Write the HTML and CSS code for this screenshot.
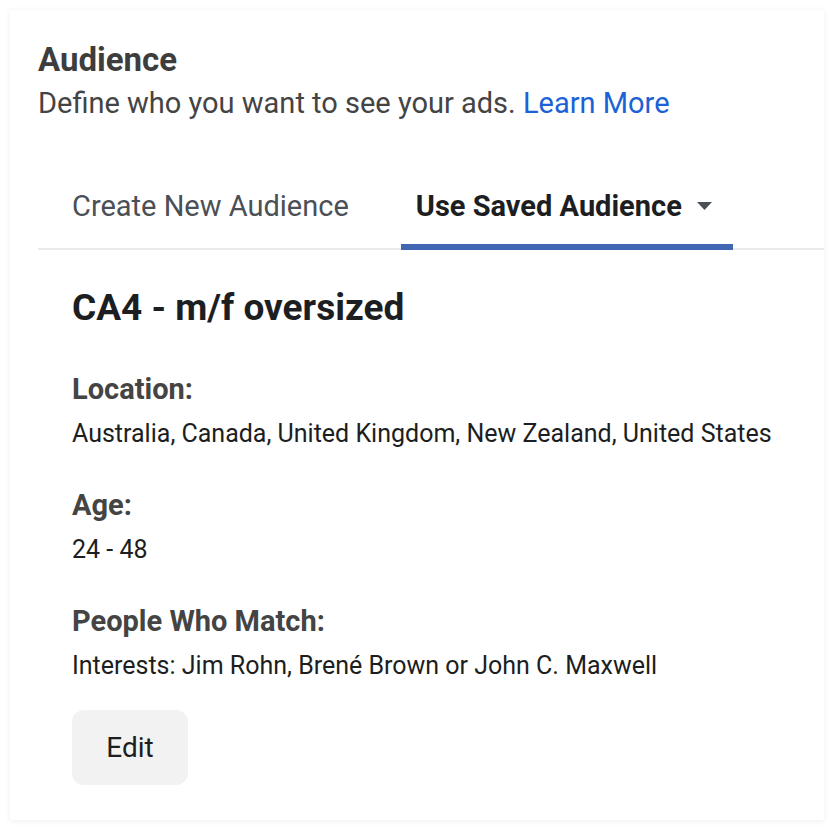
FILE: index.html
```html
<!DOCTYPE html>
<html lang="en">
<head>
<meta charset="utf-8">
<title>Audience</title>
<link rel="stylesheet" href="styles.css">
</head>
<body>
<section class="card">
  <header class="card-head">
    <h1 class="title">Audience</h1>
    <p class="subtitle">Define who you want to see your ads. <a class="link" href="#">Learn More</a></p>
  </header>
  <nav class="tabs">
    <div class="tab">Create New Audience</div>
    <div class="tab tab-active">Use Saved Audience
      <svg class="caret" width="15" height="8" viewBox="0 0 15 8"><path d="M0 0H15L7.5 8Z" fill="#4b4f56"/></svg>
    </div>
  </nav>
  <div class="content">
    <h2 class="aud-name">CA4 - m/f oversized</h2>
    <div class="field">
      <div class="label">Location:</div>
      <div class="value">Australia, Canada, United Kingdom, New Zealand, United States</div>
    </div>
    <div class="field">
      <div class="label">Age:</div>
      <div class="value">24 - 48</div>
    </div>
    <div class="field">
      <div class="label">People Who Match:</div>
      <div class="value">Interests: Jim Rohn, Brené Brown or John C. Maxwell</div>
    </div>
    <button class="edit-btn" type="button">Edit</button>
  </div>
</section>
</body>
</html>
```

FILE: styles.css
```css
html, body {
  margin: 0;
  padding: 0;
  background: #ffffff;
}
body {
  font-family: Roboto, "Liberation Sans", Arial, sans-serif;
  padding: 10px;
}
.card {
  width: 814px;
  height: 810px;
  box-sizing: border-box;
  background: #ffffff;
  box-shadow: 0 1px 6px rgba(0, 0, 0, 0.07);
  padding-top: 30px;
}
.card-head {
  padding: 0 28px;
}
.title {
  margin: 0;
  font-size: 33px;
  line-height: 40px;
  font-weight: 700;
  color: #3d3d3d;
}
.subtitle {
  margin: 5px 0 0;
  font-size: 29px;
  line-height: 36px;
  color: #444444;
}
.link {
  color: #1a62d6;
  text-decoration: none;
}
.tabs {
  display: flex;
  margin: 51px 0 0 28px;
  padding-left: 16px;
  gap: 34px;
  border-bottom: 2px solid #e8e9eb;
}
.tab {
  display: flex;
  align-items: center;
  gap: 15px;
  padding: 16px 18px 20px;
  font-size: 29px;
  line-height: 36px;
  color: #4b4f56;
  border-bottom: 6px solid transparent;
  margin-bottom: -2px;
}
.tab-active {
  font-weight: 700;
  color: #1c1e21;
  border-bottom-color: #4267b2;
  padding-left: 15px;
  padding-right: 21px;
}
.caret {
  flex: none;
}
.content {
  padding: 36px 20px 0 62px;
}
.aud-name {
  margin: 0;
  font-size: 37px;
  line-height: 44px;
  font-weight: 700;
  color: #1c1e21;
}
.field {
  margin-top: 41px;
}
.field + .field {
  margin-top: 37px;
}
.label {
  font-size: 29px;
  line-height: 36px;
  font-weight: 700;
  color: #444444;
}
.value {
  margin-top: 11px;
  font-size: 25px;
  line-height: 32px;
  color: #1c1e21;
  white-space: nowrap;
}
.edit-btn {
  display: block;
  margin-top: 28px;
  width: 116px;
  height: 75px;
  border: none;
  border-radius: 12px;
  background: #f2f2f2;
  font-family: Roboto, "Liberation Sans", Arial, sans-serif;
  font-size: 28px;
  color: #1c1e21;
  padding: 0;
}
```
